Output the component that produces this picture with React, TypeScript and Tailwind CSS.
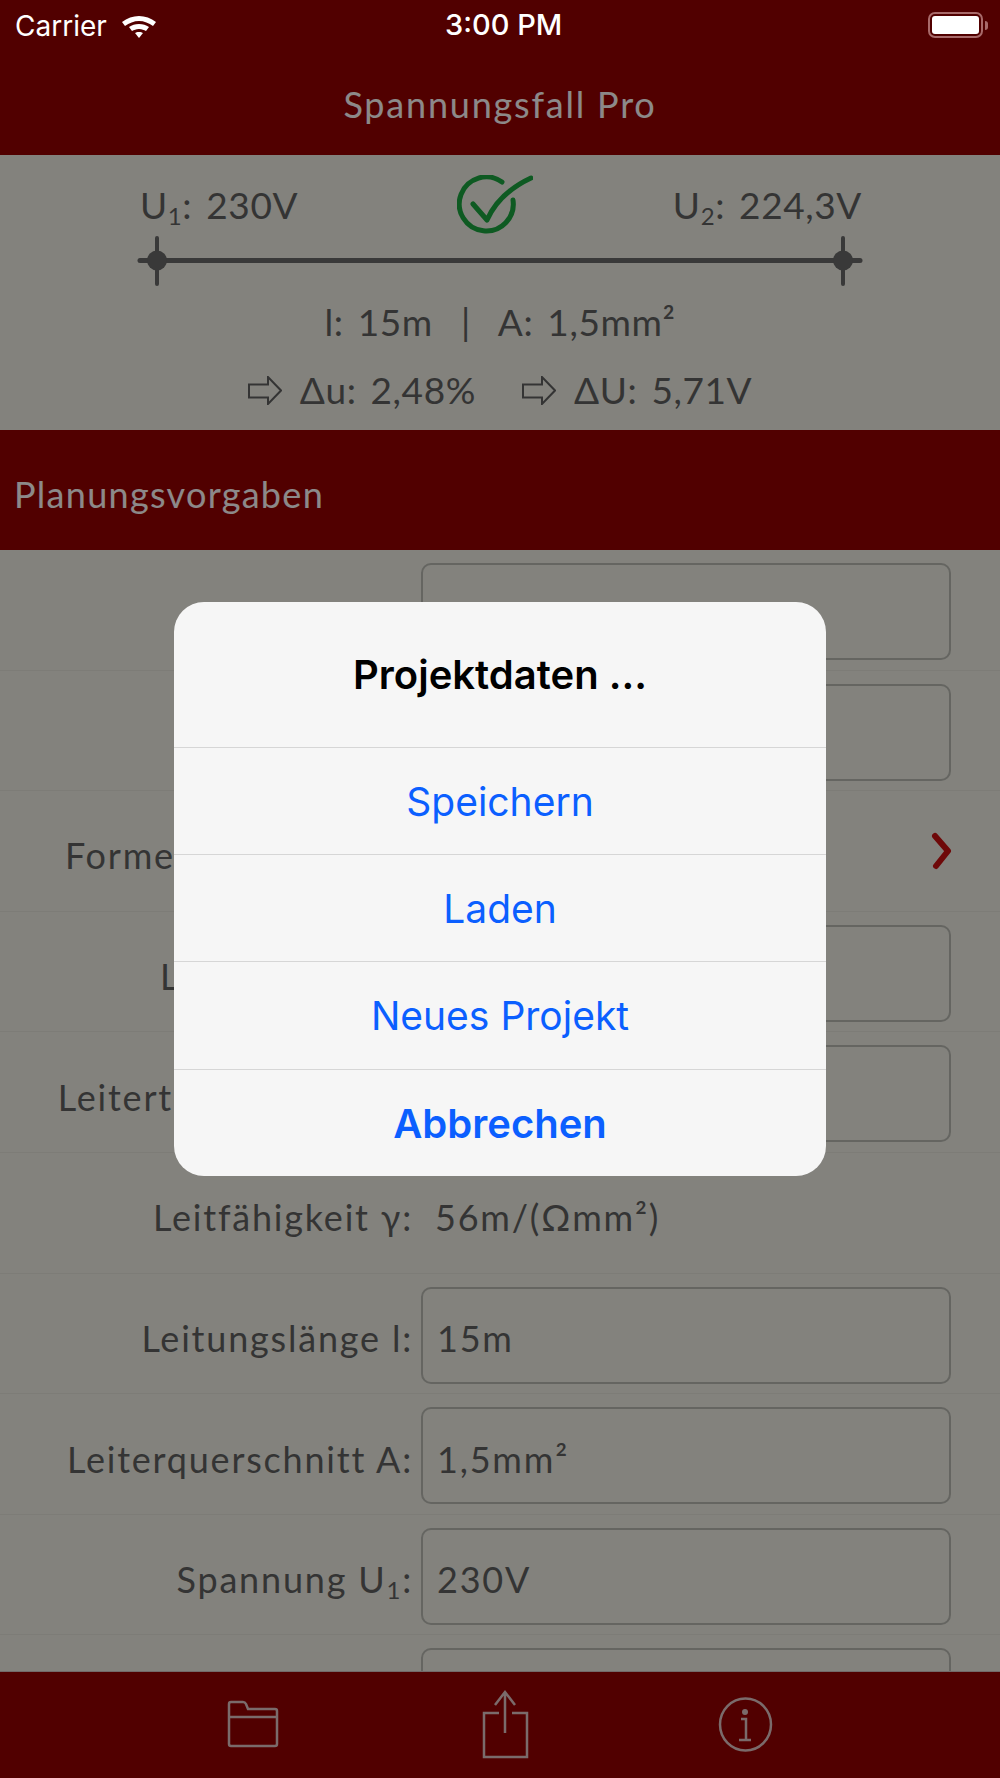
const hand = "font-['Lato',sans-serif]";

const Row = ({ label, value }: { label: React.ReactNode; value?: React.ReactNode }) => (
  <div className="h-[120.6px] border-b border-[#d0cfc6] flex items-start pt-[13px] text-[36px] tracking-[1.8px] text-[#585858]">
    <div className="w-[413px] h-[97px] flex items-center justify-end pt-[6px] shrink-0 whitespace-nowrap">{label}</div>
    <div className="ml-[8px] w-[530px] h-[97px] rounded-[10px] border-2 border-[#a8a8a2] flex items-center px-[14px] pt-[6px]">
      {value}
    </div>
  </div>
);

const Arrow = () => (
  <svg width="34" height="29" viewBox="0 0 34 29" fill="none" stroke="#585858" strokeWidth="2" className="shrink-0">
    <path d="M1 8.5h19V1l13 13.5L20 28v-6.5H1z" />
  </svg>
);

const Sub = ({ n }: { n: string }) => <sub className="text-[24px] leading-none">{n}</sub>;

const App = () => {
  return (
    <div className={`relative w-[1000px] h-[1778px] overflow-hidden bg-[#dad9d0] ${hand}`}>
      <div className="h-[155px] bg-[#880000] flex items-end justify-center pb-[24px]">
        <span className="text-[36px] text-[#eae4e4] tracking-[1.8px]">Spannungsfall Pro</span>
      </div>

      <div className="h-[275px] flex flex-col text-[#585858] text-[37px] tracking-[0.6px] [word-spacing:4px]">
        <div className="flex justify-between items-center pl-[140px] pr-[138px] h-[62px] mt-[19px]">
          <span>U<Sub n="1" />: 230V</span>
          <svg width="76" height="60" viewBox="0 0 76 60" fill="none" className="ml-[20px]">
            <path d="M45 7A27 27 0 1 0 56 25" stroke="#189639" strokeWidth="5" strokeLinecap="round" />
            <path d="M16 29L30 45Q42 18 74 3" stroke="#189639" strokeWidth="5" strokeLinecap="round" strokeLinejoin="round" />
          </svg>
          <span>U<Sub n="2" />: 224,3V</span>
        </div>
        <svg width="1000" height="50" viewBox="0 0 1000 50" className="shrink-0">
          <g stroke="#5f5f5f" strokeLinecap="round">
            <path d="M140 24.5h720" strokeWidth="5" />
            <path d="M157 2v46M843 2v46" strokeWidth="4" />
          </g>
          <circle cx="157" cy="24.5" r="10" fill="#5f5f5f" />
          <circle cx="843" cy="24.5" r="10" fill="#5f5f5f" />
        </svg>
        <div className="flex justify-center items-center h-[60px] mt-[6px]">
          l: 15m&nbsp;&nbsp;|&nbsp;&nbsp;A: 1,5mm²
        </div>
        <div className="flex justify-center items-center gap-[18px] h-[58px] mt-[9px]">
          <Arrow />
          <span className="mr-[28px]">Δu: 2,48%</span>
          <Arrow />
          <span>ΔU: 5,71V</span>
        </div>
      </div>

      <div className="h-[120px] bg-[#880000] flex items-center px-[14px] pt-[8px]">
        <span className="text-[36px] text-[#eae4e4] tracking-[1.3px]">Planungsvorgaben</span>
      </div>

      <div>
        <Row label="Stromart:" value="Wechselstrom" />
        <Row label="Netzform:" value="TN" />
        <div className="h-[120.6px] border-b border-[#d0cfc6] flex items-center justify-between pl-[65px] pr-[48px] text-[36px] tracking-[1.8px] text-[#585858]">
          <span className="pt-[8px]">Formel</span>
          <svg width="22" height="38" viewBox="0 0 22 38" fill="none" stroke="#b81010" strokeWidth="6" strokeLinecap="round" strokeLinejoin="round">
            <path d="M5 4l13 15L6 34" />
          </svg>
        </div>
        <Row label="Leitermaterial:" value="Kupfer" />
        <Row label="Leitertemperatur ϑ₁:" value="30°C" />
        <div className="h-[120.6px] border-b border-[#d0cfc6] flex items-center text-[36px] tracking-[1.8px] text-[#585858]">
          <div className="w-[413px] text-right pt-[8px]">Leitfähigkeit γ:</div>
          <div className="ml-[22px] pt-[8px]">56m/(Ωmm²)</div>
        </div>
        <Row label="Leitungslänge l:" value="15m" />
        <Row label="Leiterquerschnitt A:" value="1,5mm²" />
        <Row label={<span>Spannung U<Sub n="1" />:</span>} value="230V" />
        <Row label="" value="" />
      </div>

      <div className="absolute bottom-0 inset-x-0 h-[107px] bg-[#880000] border-t border-[#c0b0b0] flex">
        <svg width="1000" height="107" viewBox="0 0 1000 107" fill="none" stroke="#ccb2b2" strokeWidth="2.5">
          <path d="M229 72V32q0-2 2-2h12q2 0 3 2l2 5h27q2 0 2 2v33q0 2-2 2h-44q-2 0-2-2z M229 45h48" />
          <path d="M499 41H484V85H527V41H512" />
          <path d="M505 61V21M495 33l10-13 10 13" />
          <ellipse cx="745.5" cy="52.5" rx="25.5" ry="26" />
          <circle cx="745" cy="40" r="3" fill="#ccb2b2" stroke="none" />
          <path d="M741 47h5v21M739 68h12" />
        </svg>
      </div>

      <div className="absolute inset-0 bg-black/40" />

      <div className="absolute left-[174px] top-[602px] w-[652px] h-[574px] rounded-[30px] bg-[#f6f6f6] flex flex-col font-['Inter',sans-serif] text-[#0b5fff] text-[39px]">
        <div className="h-[146px] flex items-start justify-center pt-[50px] text-black font-semibold text-[40px] leading-[46px] border-b border-[#d6d6d6]">
          Projektdaten ...
        </div>
        <div className="h-[107px] flex items-center justify-center pt-[2px] border-b border-[#d6d6d6]">Speichern</div>
        <div className="h-[107px] flex items-center justify-center pt-[2px] border-b border-[#d6d6d6]">Laden</div>
        <div className="h-[108px] flex items-center justify-center pt-[2px] border-b border-[#d6d6d6]">Neues Projekt</div>
        <div className="flex-1 flex items-center justify-center pt-[2px] font-semibold text-[40px]">Abbrechen</div>
      </div>

      <div className="absolute top-0 inset-x-0 h-[50px] text-white font-['Inter',sans-serif] text-[28px] flex items-center justify-between pl-[15px] pr-[12px]">
        <div className="flex items-center gap-[15px] pt-[1px]">
          <span>Carrier</span>
          <svg width="34" height="24" viewBox="0 0 34 24" fill="white">
            <path d="M17 2C11 2 5 4 0 8l3 4c4-3 9-5 14-5s10 2 14 5l3-4c-5-4-11-6-17-6z" />
            <path d="M17 10c-4 0-7 1-10 3l3 4c2-1 4-2 7-2s5 1 7 2l3-4c-3-2-6-3-10-3z" />
            <path d="M17 18c-2 0-3 .5-4 1l4 5 4-5c-1-.5-2-1-4-1z" />
          </svg>
        </div>
        <span className="absolute left-[445px] text-[29px] font-medium">3:00 PM</span>
        <div className="flex items-center">
          <div className="w-[55px] h-[26px] rounded-[7px] border-2 border-[#a86a6a] p-[2px]">
            <div className="w-full h-full rounded-[3px] bg-white" />
          </div>
          <div className="ml-[2px] w-[3px] h-[9px] bg-[#a86a6a] rounded-r" />
        </div>
      </div>
    </div>
  );
};

export default App;
